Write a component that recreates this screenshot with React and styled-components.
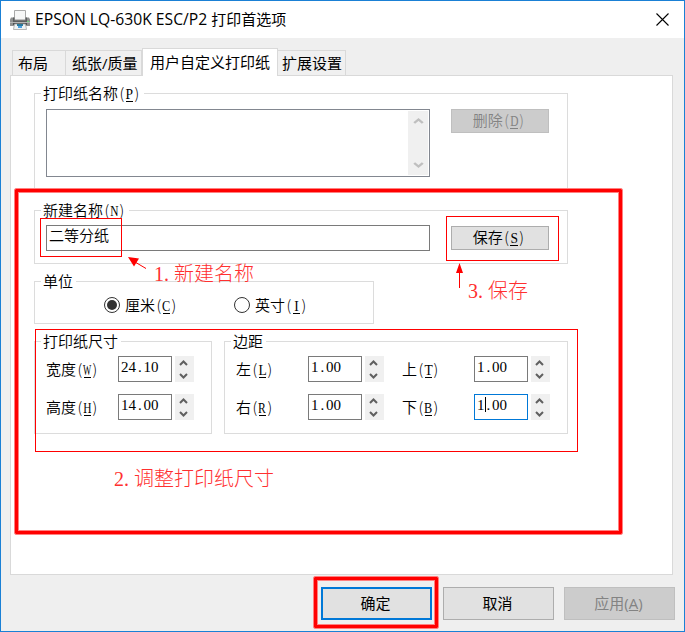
import React, { useState } from 'react';
import styled, { createGlobalStyle, css } from 'styled-components';

const GlobalStyle = createGlobalStyle`
  * {
    box-sizing: border-box;
  }

  body {
    margin: 0;
    background: #fff;
  }
`;

const Window = styled.div`
  position: relative;
  display: flex;
  flex-direction: column;
  width: 685px;
  height: 632px;
  overflow: hidden;
  border: 1px solid #1a80d5;
  background: #efefef;
  color: #000;
  font-family: 'Open Sans', 'Noto Sans CJK SC', sans-serif;
  font-size: 15px;
`;

const TitleBar = styled.header`
  display: flex;
  align-items: center;
  height: 37px;
  padding: 0 15px 0 9px;
  background: #fff;
`;

const Title = styled.h1`
  flex: 1;
  margin: 0 0 0 5px;
  font-size: 15px;
  font-weight: 400;
  line-height: 37px;
  white-space: pre;
`;

const LatinTitle = styled.span`
  font-size: 15.7px;
`;

const CloseButton = styled.button`
  display: flex;
  padding: 0;
  border: none;
  background: none;
`;

const Tabs = styled.nav`
  display: flex;
  align-items: flex-end;
  height: 37px;
  padding-left: 11px;
`;

const Tab = styled.button`
  width: ${props => props.$width}px;
  height: ${props => (props.$active ? 28 : 25)}px;
  margin-bottom: ${props => (props.$active ? -1 : 0)}px;
  padding: 0 0 ${props => (props.$active ? 2 : 0)}px ${props => props.$indent}px;
  border: 1px solid #d9d9d9;
  border-bottom: none;
  border-left-width: ${props => (props.$joined ? 0 : 1)}px;
  background: ${props => (props.$active ? '#fff' : '#f0f0f0')};
  color: #000;
  font: inherit;
  line-height: 24px;
  text-align: left;
  white-space: nowrap;
  z-index: ${props => (props.$active ? 1 : 0)};
`;

const Panel = styled.main`
  width: 663px;
  height: 500px;
  margin-left: 9px;
  padding: 8px 0 0 23px;
  border: 1px solid #d9d9d9;
  background: #fff;
  font-family: 'Liberation Serif', 'Noto Sans CJK SC', sans-serif;
  font-weight: 350;
`;

const Group = styled.fieldset`
  width: ${props => props.$width}px;
  height: ${props => props.$height}px;
  min-width: 0;
  margin: 0 0 ${props => props.$gap || 0}px;
  padding: ${props => props.$top}px 0 0 11px;
  border: 1px solid #dcdcdc;
`;

const Legend = styled.legend`
  height: 19px;
  margin-left: -5px;
  padding: 0 3px 0 2px;
  line-height: 21px;
  white-space: nowrap;
`;

const Row = styled.div`
  display: flex;
  align-items: ${props => props.$align || 'center'};
  gap: ${props => props.$gap || 0}px;
`;

const Cell = styled.span`
  display: inline-flex;
  justify-content: center;
  width: 0.5em;
  font-family: 'Liberation Serif', serif;
`;

const Paren = styled(Cell)`
  font-family: 'Noto Sans CJK SC', sans-serif;
  font-weight: 300;
  line-height: 1;
`;

const Letter = styled.span`
  display: inline-block;
  transform: scaleX(${props => props.$scale});
`;

const Mnemonic = styled(Cell)`
  border-bottom: 1px solid currentColor;
  line-height: 14px;
`;

const ListBox = styled.div`
  display: flex;
  justify-content: flex-end;
  width: 384px;
  height: 68px;
  padding: 1px;
  border: 1px solid #828790;
`;

const ScrollBar = styled.div`
  display: flex;
  flex-direction: column;
  justify-content: space-between;
  align-items: center;
  width: 20px;
  padding: 7px 0;
  background: #f0f0f0;
`;

const buttonColors = props =>
  props.$disabled
    ? css`
        border: 1px solid #bfbfbf;
        background: #cccccc;
        color: #838383;
      `
    : css`
        border: 1px solid #adadad;
        background: #e1e1e1;
        color: #000;
      `;

const Button = styled.button`
  width: 98px;
  height: 24px;
  padding: 0 2px 0 0;
  font: inherit;
  line-height: 22px;
  ${buttonColors}
`;

const DialogButton = styled.button`
  width: 111px;
  height: 33px;
  padding: 0 2px 2px 0;
  font: inherit;
  ${buttonColors}
  ${props =>
    props.$primary &&
    css`
      margin-right: 1px;
      border: 2px solid #0078d7;
    `}
`;

const TextBox = styled.div`
  width: ${props => props.$width}px;
  height: 26px;
  padding-left: 2px;
  border: 1px solid ${props => (props.$focused ? '#0078d7' : '#7a7a7a')};
  background: #fff;
  line-height: 21px;
  white-space: nowrap;
`;

const Caret = styled.span`
  position: absolute;
  width: 1px;
  height: 15px;
  margin-top: 2px;
  background: #000;
`;

const Label = styled.label`
  width: 72px;
  padding-top: 2px;
  line-height: 24px;
  white-space: nowrap;
`;

const Spinner = styled.div`
  display: flex;
  flex-direction: column;
  align-items: center;
  justify-content: space-between;
  width: 19px;
  height: 26px;
  margin-left: 3px;
  padding: 4px 2px 3px 0;
  background: #f0f0f0;
`;

const Fields = styled.div`
  display: grid;
  grid-template-columns: repeat(${props => props.$columns}, 148px);
  column-gap: 18px;
  row-gap: 12px;
`;

const Radio = styled.label`
  display: flex;
  align-items: center;
  gap: 5px;
  width: 130px;
  height: 28px;
`;

const RadioText = styled.span`
  padding-bottom: 2px;
`;

const RadioGroup = styled(Row)`
  padding-left: 58px;
`;

const RadioMark = styled.span`
  display: flex;
  align-items: center;
  justify-content: center;
  width: 16px;
  height: 16px;
  border: 1px solid #333;
  border-radius: 50%;

  &::after {
    content: '';
    width: 10px;
    height: 10px;
    border-radius: 50%;
    background: ${props => (props.$checked ? '#333' : 'transparent')};
  }
`;

const Footer = styled.footer`
  display: flex;
  justify-content: flex-end;
  gap: 10px;
  padding: 12px 9px 0 0;
`;

const Highlight = styled.div`
  position: absolute;
  left: ${props => props.$x - 1}px;
  top: ${props => props.$y - 1}px;
  width: ${props => props.$w}px;
  height: ${props => props.$h}px;
  pointer-events: none;
  z-index: 2;
  ${props =>
    props.$thick
      ? css`
          border: 1px solid #ff8080;
          border-radius: 2px;
          box-shadow: inset 0 0 0 3px #f00, inset 0 0 0 4px #ff8080;
        `
      : css`
          border: 1px solid #f00;
        `}
`;

const Note = styled.div`
  position: absolute;
  left: ${props => props.$x - 1}px;
  top: ${props => props.$y - 1}px;
  color: #ff3030;
  font-family: 'Liberation Serif', 'Noto Sans CJK SC', sans-serif;
  font-size: 20px;
  font-weight: 300;
  line-height: 24px;
  white-space: nowrap;
`;

const NoteDot = styled.span`
  display: inline-block;
  width: 0.5em;
`;

const Arrows = styled.svg`
  position: absolute;
  left: -1px;
  top: -1px;
  pointer-events: none;
`;

// Latin characters take half the width of a Chinese one
const HalfWidth = ({ text }) => [...text].map((char, i) => <Cell key={i}>{char}</Cell>);

const letterScale = { W: 0.58, H: 0.76, N: 0.76, D: 0.76, R: 0.78, B: 0.82, C: 0.82 };

const Key = ({ char }) => (
  <>
    <Paren>(</Paren>
    <Mnemonic>
      <Letter $scale={letterScale[char] || 0.9}>{char}</Letter>
    </Mnemonic>
    <Paren>)</Paren>
  </>
);

const Chevron = ({ down, color = '#606060', size = 9 }) => (
  <svg width={size} height="6" viewBox="0 0 9 6" preserveAspectRatio="none">
    <path
      d={down ? 'M1 1L4.5 4.5L8 1' : 'M1 5L4.5 1.5L8 5'}
      fill="none"
      stroke={color}
      strokeWidth="2"
    />
  </svg>
);

const PrinterIcon = () => (
  <svg width="20" height="20" viewBox="0 0 20 20">
    <path d="M4.5 0.5h11v10h-11z" fill="#f7f7f7" stroke="#a9a9a9" />
    <path d="M1 7.5h3v2h12v-2h3l1 2v6.5H0V9.5z" fill="#8f9090" />
    <path d="M3 7.5h1.5v3h11v-3H17V12H3z" fill="#5c5e5f" />
    <path d="M0 12h20v1H0z" fill="#b4b5b5" />
    <path d="M3 13h14v2H3z" fill="#4c4f50" />
    <path d="M4.5 14h11l1 5.5h-13z" fill="#eef2f3" stroke="#a5a5a5" strokeWidth="0.8" />
    <path d="M7 14h6v2H7z" fill="#2a7a9c" />
    <path d="M8 16h4v2H8z" fill="#4c9fe0" />
    <path d="M17 11h2v1h-2z" fill="#70d080" />
  </svg>
);

const NumberField = ({ label, char, value, focused }) => (
  <Row>
    <Label>
      {label}
      <Key char={char} />
    </Label>
    <TextBox $width={54} $focused={focused}>
      <HalfWidth text={value.slice(0, 1)} />
      {focused && <Caret />}
      <HalfWidth text={value.slice(1)} />
    </TextBox>
    <Spinner>
      <Chevron />
      <Chevron down />
    </Spinner>
  </Row>
);

const StepNote = ({ x, y, step, children }) => (
  <Note $x={x} $y={y}>
    <HalfWidth text={step} />
    <NoteDot>.</NoteDot>
    {children}
  </Note>
);

const PrintPreferences = () => {
  const [unit, setUnit] = useState('cm');

  return (
    <>
      <GlobalStyle />
      <Window>
        <TitleBar>
          <PrinterIcon />
          <Title>
            <LatinTitle>EPSON LQ-630K ESC/P2 </LatinTitle>打印首选项
          </Title>
          <CloseButton aria-label="close">
            <svg width="13" height="13" viewBox="0 0 13 13">
              <path d="M0.5 0.5L12.5 12.5M12.5 0.5L0.5 12.5" stroke="#000" strokeWidth="1.1" />
            </svg>
          </CloseButton>
        </TitleBar>

        <Tabs>
          <Tab $width={54} $indent={5}>布局</Tab>
          <Tab $width={76} $indent={6} $joined>纸张/质量</Tab>
          <Tab $width={136} $indent={7} $active>用户自定义打印纸</Tab>
          <Tab $width={68} $indent={4} $joined>扩展设置</Tab>
        </Tabs>

        <Panel>
          <Group $width={534} $height={105} $gap={12} $top={6}>
            <Legend>打印纸名称<Key char="P" /></Legend>
            <Row $gap={21} $align="flex-start">
              <ListBox>
                <ScrollBar>
                  <Chevron color="#bfbfbf" size={11} />
                  <Chevron color="#bfbfbf" size={11} down />
                </ScrollBar>
              </ListBox>
              <Button $disabled>删除<Key char="D" /></Button>
            </Row>
          </Group>

          <Group $width={534} $height={63} $gap={8} $top={5}>
            <Legend>新建名称<Key char="N" /></Legend>
            <Row $gap={21}>
              <TextBox $width={384}>二等分纸</TextBox>
              <Button>保存<Key char="S" /></Button>
            </Row>
          </Group>

          <Group $width={340} $height={52} $gap={8} $top={0}>
            <Legend>单位</Legend>
            <RadioGroup>
              <Radio onClick={() => setUnit('cm')}>
                <RadioMark $checked={unit === 'cm'} />
                <RadioText>厘米<Key char="C" /></RadioText>
              </Radio>
              <Radio onClick={() => setUnit('inch')}>
                <RadioMark $checked={unit === 'inch'} />
                <RadioText>英寸<Key char="I" /></RadioText>
              </Radio>
            </RadioGroup>
          </Group>

          <Row $gap={12}>
            <Group $width={178} $height={102} $top={5}>
              <Legend>打印纸尺寸</Legend>
              <Fields $columns={1}>
                <NumberField label="宽度" char="W" value="24.10" />
                <NumberField label="高度" char="H" value="14.00" />
              </Fields>
            </Group>
            <Group $width={344} $height={102} $top={5}>
              <Legend>边距</Legend>
              <Fields $columns={2}>
                <NumberField label="左" char="L" value="1.00" />
                <NumberField label="上" char="T" value="1.00" />
                <NumberField label="右" char="R" value="1.00" />
                <NumberField label="下" char="B" value="1.00" focused />
              </Fields>
            </Group>
          </Row>
        </Panel>

        <Footer>
          <DialogButton $primary>确定</DialogButton>
          <DialogButton>取消</DialogButton>
          <DialogButton $disabled>应用(<u>A</u>)</DialogButton>
        </Footer>

        <Highlight $x={14} $y={188} $w={609} $h={347} $thick />
        <Highlight $x={313} $y={576} $w={126} $h={53} $thick />
        <Highlight $x={40} $y={218} $w={82} $h={39} />
        <Highlight $x={446} $y={216} $w={113} $h={45} />
        <Highlight $x={35} $y={329} $w={543} $h={123} />

        <Arrows width="685" height="632">
          <path d="M146 268.5L135 262M459.5 288V272" stroke="#f00" fill="none" />
          <path d="M128 257l11 1.5l-5 8zM459.5 263l3.5 10h-7z" fill="#f00" />
        </Arrows>
        <StepNote x={154} y={262} step="1">新建名称</StepNote>
        <StepNote x={114} y={467} step="2">调整打印纸尺寸</StepNote>
        <StepNote x={468} y={279} step="3">保存</StepNote>
      </Window>
    </>
  );
};

export default PrintPreferences;
